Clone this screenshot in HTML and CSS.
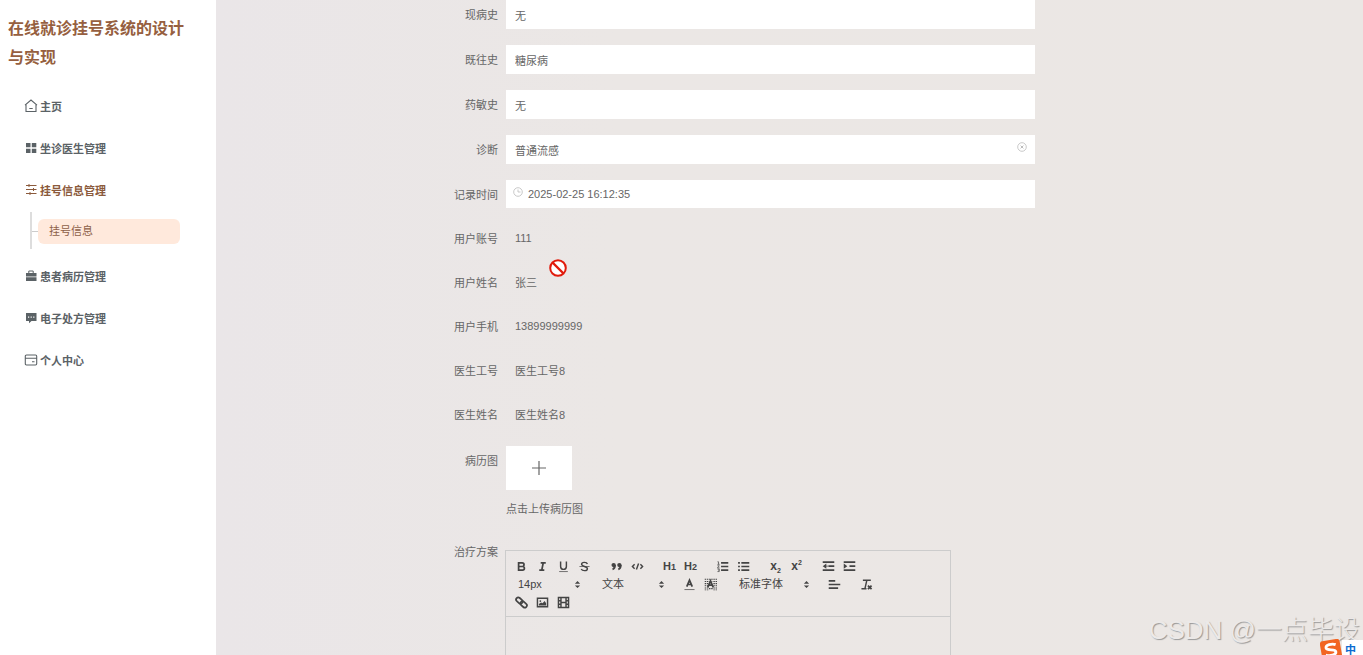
FILE: index.html
```html
<!DOCTYPE html>
<html lang="zh-CN">
<head>
<meta charset="utf-8">
<title>在线就诊挂号系统的设计与实现</title>
<link rel="stylesheet" href="styles.css">
</head>
<body>
<div class="shell">
  <aside class="sidebar">
    <h1 class="brand">在线就诊挂号系统的设计与实现</h1>
    <nav class="menu">
      <a class="menu-item" href="#"><svg class="icon" viewBox="0 0 14 14"><path d="M1 6.200 7 1l6 5.200M2 5.500V12.500H12V5.500M5.300 9.500h3.400" fill="none" stroke="currentColor" stroke-width="1.100"/></svg>主页</a>
      <a class="menu-item" href="#"><svg class="icon" viewBox="0 0 14 14"><path d="M2 2h4.500v4.300H2zM7.800 2h4.500v4.300H7.800zM2 7.800h4.500V12H2zM7.800 7.800h4.500V12H7.800z" fill="currentColor"/></svg>坐诊医生管理</a>
      <a class="menu-item active" href="#"><svg class="icon" viewBox="0 0 14 14"><path d="M2 2.500h10.500M2 6.500h10.500M2 10.500h10.500M5 1v3M9.500 5v3M6 9v3" fill="none" stroke="currentColor"/></svg>挂号信息管理</a>
      <div class="submenu"><a class="submenu-item" href="#">挂号信息</a></div>
      <a class="menu-item" href="#"><svg class="icon" viewBox="0 0 14 14"><path d="M4.800 4V2h4.400v2" fill="none" stroke="currentColor"/><path d="M2 4h10.500v3.500H2zM2 8.200h10.500V12H2z" fill="currentColor"/></svg>患者病历管理</a>
      <a class="menu-item" href="#"><svg class="icon" viewBox="0 0 14 14"><path d="M2 2h10.500v8H7.500L5 12.300V10H2z" fill="currentColor"/><path d="M4 5.500h1.200v1.200H4zM6.600 5.500h1.200v1.200H6.600zM9.200 5.500h1.200v1.200H9.200z" fill="#fff"/></svg>电子处方管理</a>
      <a class="menu-item" href="#"><svg class="icon" viewBox="0 0 14 14"><path d="M2.500 2h9q1.200 0 1.200 1.200v7.600q0 1.200-1.200 1.200h-9q-1.200 0-1.200-1.200V3.200Q1.300 2 2.500 2zM1.300 5.200h11.400M8 8.700h2.500" fill="none" stroke="currentColor" stroke-width="1.100"/></svg>个人中心</a>
    </nav>
  </aside>

  <main class="content">
    <form class="form">
      <div class="row"><label class="label" for="f1">现病史</label><input class="input" id="f1" type="text" value="无"></div>
      <div class="row"><label class="label" for="f2">既往史</label><input class="input" id="f2" type="text" value="糖尿病"></div>
      <div class="row"><label class="label" for="f3">药敏史</label><input class="input" id="f3" type="text" value="无"></div>
      <div class="row"><label class="label" for="f4">诊断</label>
        <div class="control"><input class="input" id="f4" type="text" value="普通流感">
          <button class="clear" type="button" aria-label="清空"><svg viewBox="0 0 10 10"><circle cx="5" cy="5" r="4.300" fill="none" stroke="currentColor" stroke-width=".8"/><path d="M3.600 3.600l2.800 2.800M6.400 3.600 3.600 6.400" stroke="currentColor"/></svg></button></div></div>
      <div class="row"><label class="label" for="f5">记录时间</label>
        <div class="control"><svg class="clock" viewBox="0 0 10 10"><circle cx="5" cy="5" r="4.300" fill="none" stroke="currentColor" stroke-width=".8"/><path d="M5 2.500V5h2.500" fill="none" stroke="currentColor" stroke-width=".8"/></svg>
          <input class="input date" id="f5" type="text" value="2025-02-25 16:12:35"></div></div>
      <div class="row"><label class="label" for="f6">用户账号</label><input class="input plain" id="f6" type="text" value="111" readonly></div>
      <div class="row"><label class="label" for="f7">用户姓名</label><input class="input plain" id="f7" type="text" value="张三" readonly></div>
      <div class="row"><label class="label" for="f8">用户手机</label><input class="input plain" id="f8" type="text" value="13899999999" readonly></div>
      <div class="row"><label class="label" for="f9">医生工号</label><input class="input plain" id="f9" type="text" value="医生工号8" readonly></div>
      <div class="row"><label class="label" for="f10">医生姓名</label><input class="input plain" id="f10" type="text" value="医生姓名8" readonly></div>
      <div class="row upload-row"><label class="label" for="upload">病历图</label>
        <div class="control"><button class="upload" id="upload" type="button"><svg viewBox="0 0 16 16"><path d="M8 1v14M1 8h14" stroke="currentColor" stroke-width="1.200"/></svg></button>
          <p class="tip">点击上传病历图</p></div></div>
      <div class="row"><label class="label" for="plan">治疗方案</label>
        <div class="editor">
          <div class="toolbar">
            <div class="tools">
              <div class="group">
                <button class="tool" type="button" aria-label="加粗"><svg viewBox="0 0 18 18"><path d="M5 4h5a2.500 2.500 0 0 1 0 5H5zM5 9h5.500a2.500 2.500 0 0 1 0 5H5z" class="s2"/></svg></button>
                <button class="tool" type="button" aria-label="斜体"><svg viewBox="0 0 18 18"><path d="M6.500 4h7M4.500 14h7M10 4 8 14" class="s2"/></svg></button>
                <button class="tool" type="button" aria-label="下划线"><svg viewBox="0 0 18 18"><path d="M5 2v7a4 4 0 0 0 8 0V2" class="s"/><path d="M3 16h12" class="s1"/></svg></button>
                <button class="tool" type="button" aria-label="删除线"><svg viewBox="0 0 18 18"><path d="M13 5.500C12 2.500 5 2.500 5 6c0 3.500 8 2.500 8 6 0 3.500-7 3.500-8.500.5" class="s"/><path d="M2 9h14" class="s1"/></svg></button>
              </div>
              <div class="group">
                <button class="tool" type="button" aria-label="引用"><svg viewBox="0 0 18 18"><circle cx="5" cy="7" r="3" class="f"/><circle cx="13" cy="7" r="3" class="f"/><path d="M7 7q0 5-3.500 6M15 7q0 5-3.500 6" class="s2"/></svg></button>
                <button class="tool" type="button" aria-label="代码"><svg viewBox="0 0 18 18"><path d="M5 6 2 9l3 3M13 6l3 3-3 3M10.500 5l-3 8" class="s"/></svg></button>
              </div>
              <div class="group">
                <button class="tool heading" type="button">H<small>1</small></button>
                <button class="tool heading" type="button">H<small>2</small></button>
              </div>
              <div class="group">
                <button class="tool" type="button" aria-label="有序列表"><svg viewBox="0 0 18 18"><path d="M7 4h10M7 9h10M7 14h10" class="s2"/><path d="M2 2.500h1.500V6M2 6h3M2 8h2.500L2 11h3M2 12.500h2.500V16H2M3 14h1.500" class="s1"/></svg></button>
                <button class="tool" type="button" aria-label="无序列表"><svg viewBox="0 0 18 18"><path d="M6 4h11M6 9h11M6 14h11M1.500 4h2.500M1.500 9h2.500M1.500 14h2.500" class="s2"/></svg></button>
              </div>
              <div class="group">
                <button class="tool script" type="button">x<sub>2</sub></button>
                <button class="tool script" type="button">x<sup>2</sup></button>
              </div>
              <div class="group">
                <button class="tool" type="button" aria-label="减少缩进"><svg viewBox="0 0 18 18"><path d="M1 3h16M9 8.500h8M1 14h16" class="s2"/><path d="M1 8.500 6 5v7z" class="f"/><path d="M5 8.500h4" class="s1"/></svg></button>
                <button class="tool" type="button" aria-label="增加缩进"><svg viewBox="0 0 18 18"><path d="M1 3h16M9 8.500h8M1 14h16" class="s2"/><path d="M6 8.500 1 5v7z" class="f"/></svg></button>
              </div>
            </div>
            <div class="tools">
              <div class="picker"><select aria-label="字号"><option>14px</option></select><svg viewBox="0 0 8 10"><path d="M1 4 4 1l3 3zM1 6l3 3 3-3z" class="f"/></svg></div>
              <div class="picker"><select aria-label="段落格式"><option>文本</option></select><svg viewBox="0 0 8 10"><path d="M1 4 4 1l3 3zM1 6l3 3 3-3z" class="f"/></svg></div>
              <div class="group">
                <button class="tool" type="button" aria-label="文字颜色"><svg viewBox="0 0 18 18"><path d="M5.200 12 9 3l3.800 9M6.500 9h5" class="s2"/><path d="M2 16h14" class="s1"/></svg></button>
                <button class="tool" type="button" aria-label="背景颜色"><svg viewBox="0 0 18 18"><path d="M2 1v16M5 1v16M8 1v4M11 1v4M14 1v16M17 1v16M8 14v3M11 14v3" class="s" stroke-dasharray="1.500 1.500"/><path d="M5.200 13 9 4l3.800 9M6.500 10h5" class="s2"/></svg></button>
              </div>
              <div class="picker wide"><select aria-label="字体"><option>标准字体</option></select><svg viewBox="0 0 8 10"><path d="M1 4 4 1l3 3zM1 6l3 3 3-3z" class="f"/></svg></div>
              <button class="tool" type="button" aria-label="对齐"><svg viewBox="0 0 18 18"><path d="M1 4h9M1 9h16M1 14h13" class="s2"/></svg></button>
              <button class="tool" type="button" aria-label="清除格式"><svg viewBox="0 0 18 18"><path d="M4 3h11M9.500 3 7 14M2 15h7" class="s"/><path d="M11 10.500l5 5M16 10.500l-5 5" class="s2"/></svg></button>
            </div>
            <div class="tools">
              <div class="group">
                <button class="tool" type="button" aria-label="链接"><svg viewBox="0 0 18 18"><g transform="rotate(42 9 9)"><rect x="0" y="6" width="10" height="6" rx="3" class="s2"/><rect x="8" y="6" width="10" height="6" rx="3" class="s2"/></g></svg></button>
                <button class="tool" type="button" aria-label="图片"><svg viewBox="0 0 18 18"><path d="M2 3h14v12H2z" class="s"/><circle cx="6" cy="7" r="1.200" class="f"/><path d="M4 13v-2l3-2 2 1 3-3 2 3v3z" class="f"/></svg></button>
                <button class="tool" type="button" aria-label="视频"><svg viewBox="0 0 18 18"><path d="M2 2h14v14H2zM5.500 2v14M12.500 2v14M5.500 9h7M2 6.500h3M2 11.500h3M13 6.500h3M13 11.500h3" class="s"/></svg></button>
              </div>
            </div>
          </div>
          <textarea class="editor-text" id="plan"></textarea>
        </div>
      </div>
    </form>
  </main>
</div>
<svg class="blocked" viewBox="0 0 18 18"><circle cx="9" cy="9" r="7.800" fill="#fff" stroke="#e11b0c" stroke-width="2"/><path d="M3.500 3.500l11 11" stroke="#e11b0c" stroke-width="2.400"/></svg>
<div class="watermark">CSDN @一点毕设</div>
<div class="ime"><svg viewBox="0 0 22 22"><g transform="rotate(-10 11 11)"><rect x="1" y="1" width="20" height="20" rx="3" fill="#f26522"/><path d="M16.500 6.500C13 4.500 6 5 6.500 8.500c.5 3 9 1.500 9 5 0 3.500-7 3.500-10.500 1.500" fill="none" stroke="#fff" stroke-width="2.800"/></g></svg><span class="ime-mode">中</span></div>
</body>
</html>
```
FILE: styles.css
```css
* { box-sizing: border-box; }

body {
  margin: 0;
  overflow: hidden;
  font-family: "Liberation Sans", "Noto Sans CJK SC", sans-serif;
  font-size: 11px;
  color: #666;
}

a { color: inherit; text-decoration: none; }
button, input, select, textarea { font: inherit; color: inherit; border: 0; margin: 0; padding: 0; background: none; outline: 0; }
svg { display: block; }

.shell { display: flex; height: 100vh; overflow: hidden; }

.sidebar { flex: 0 0 216px; background: #fff; padding: 14px 0; }
.brand { margin: 0 24px 13px 8px; font-size: 16px; line-height: 29px; color: #965f40; }

.menu-item {
  display: flex;
  align-items: center;
  gap: 2px;
  height: 42px;
  padding-left: 24px;
  font-weight: 700;
  color: #5b6266;
}
.menu-item.active { color: #8b5a3c; }
.icon { width: 14px; height: 14px; }

.submenu { position: relative; height: 44px; padding: 8px 36px 0 38px; }
.submenu::before { content: ""; position: absolute; left: 30px; top: 1px; width: 2px; height: 37px; background: #ddd; }
.submenu::after { content: ""; position: absolute; left: 32px; top: 20px; width: 6px; height: 1px; background: #ccc; }
.submenu-item {
  display: block;
  height: 25px;
  padding-left: 11px;
  line-height: 25px;
  border-radius: 6px;
  background: #ffe9dc;
  color: #8d6048;
}

.content { flex: 1; min-width: 0; padding: 0 328px 0 229px; background: linear-gradient(90deg, #eae6e8, #ebe7e5 35%, #ebe7e4); }
.form { display: flex; flex-direction: column; gap: 16px; }
.row { display: flex; gap: 8px; align-items: flex-start; }
.label { flex: 0 0 53px; line-height: 30px; text-align: right; height: 28px; }
.control { flex: 1; position: relative; }
.input { flex: 1; display: block; width: 100%; height: 29px; padding: 0 9px; background: #fff; }
.input.plain { height: 28px; background: transparent; }
.input.date { height: 28px; padding-left: 22px; }
.clear, .clock { position: absolute; top: 7px; width: 10px; height: 10px; color: #bbb; }
.clear { right: 8px; }
.clock { left: 7px; }

.upload-row { padding-top: 2px; }
.upload { display: flex; align-items: center; justify-content: center; width: 66px; height: 44px; background: #fff; }
.upload svg { width: 16px; height: 16px; }
.tip { margin: 7px 0 0; line-height: 24px; }

.editor { width: 446px; margin: 13px 0 0 -1px; border: 1px solid #ccc; }
.toolbar { padding: 6px 5px 5px; border-bottom: 1px solid #ccc; color: #444; }
.tools { display: flex; gap: 11px; height: 18px; }
.group { display: flex; }
.tool { display: flex; align-items: center; justify-content: center; width: 21px; height: 18px; }
.tool svg { width: 13px; height: 13px; }
.s, .s1, .s2 { fill: none; stroke: currentColor; stroke-width: 2; }
.s1 { stroke-width: 1; }
.s2 { stroke-width: 2.4; }
.f { fill: currentColor; }
.heading { align-items: baseline; font-weight: 700; line-height: 18px; }
.heading small { font-size: 9px; }
.script { font-size: 12px; font-weight: 700; line-height: 18px; }
.script sub, .script sup { font-size: 7px; line-height: 8px; }
.script sub { align-self: flex-end; }
.script sup { align-self: flex-start; padding-top: 2px; }

.picker { position: relative; width: 73px; height: 18px; }
.picker.wide { width: 81px; }
.picker select { appearance: none; width: 100%; height: 18px; padding-left: 7px; }
.picker svg { position: absolute; right: 3px; top: 5px; width: 7px; height: 9px; }
.editor-text { display: block; width: 100%; height: 200px; resize: none; padding: 12px; }

.blocked { position: absolute; left: 549px; top: 259px; width: 18px; height: 18px; }

.ime { position: absolute; right: 0; bottom: -6px; display: flex; align-items: center; }
.ime svg { width: 22px; height: 22px; }
.ime-mode { width: 21px; height: 20px; padding-left: 3px; background: #fff; color: #0b6bd0; font-weight: 700; line-height: 20px; }

.watermark {
  position: absolute;
  right: 3px;
  bottom: 5px;
  font: 300 26px/40px "Liberation Sans", "Noto Sans CJK SC", sans-serif;
  color: #ece9e8;
  text-shadow: 1px 1px 1px #999;
  white-space: nowrap;
}
```
